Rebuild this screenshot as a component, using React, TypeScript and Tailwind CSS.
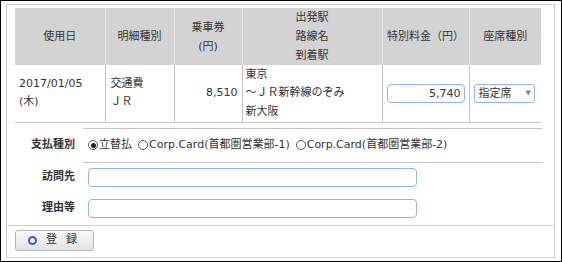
const font = { fontFamily: '"DejaVu Sans", "Noto Sans CJK JP", sans-serif' };

function Radio({ checked, label }: { checked?: boolean; label: string }) {
  return (
    <label className="flex items-center">
      <span className="w-[10px] h-[10px] rounded-full border border-[#555] flex items-center justify-center bg-white">
        {checked && <span className="w-[5px] h-[5px] rounded-full bg-[#222]" />}
      </span>
      <span className="ml-[1px]">{label}</span>
    </label>
  );
}

function InputRow({ label, h }: { label: string; h: string }) {
  return (
    <div className={`${h} flex`}>
      <div className="w-[76px] shrink-0 font-bold pr-[8px] flex items-center justify-end">{label}</div>
      <div className="flex items-center pl-[5px]">
        <div className="w-[329px] h-[19px] border border-[#8fb4ee] rounded-[4px]" />
      </div>
    </div>
  );
}

export default function App() {
  const th = 'bg-[#d3d3d3] border-x border-[#e6e6e6] font-normal text-center leading-[19px] p-0';
  const td = 'border-x border-[#c4c4c4] align-middle leading-[18.5px] p-0';

  return (
    <div className="w-[562px] h-[262px] border border-black bg-white pl-[5px] pr-[6px] pt-[3px] text-[11px] text-[#333]" style={font}>
      <div className="w-[549px] h-[254px] border border-[#cfcfcf] flex flex-col">
        <div className="pl-[8px] pr-[12px] pt-[3px]">
          <table className="border-collapse table-fixed w-[526px]">
            <colgroup>
              <col className="w-[90px]" />
              <col className="w-[69px]" />
              <col className="w-[68px]" />
              <col className="w-[140px]" />
              <col className="w-[87px]" />
              <col className="w-[72px]" />
            </colgroup>
            <thead>
              <tr className="h-[57px]">
                <th className={`${th} border-l-0`}>使用日</th>
                <th className={th}>明細種別</th>
                <th className={th}>乗車券<br />(円)</th>
                <th className={th}>出発駅<br />路線名<br />到着駅</th>
                <th className={th}>特別料金（円）</th>
                <th className={`${th} border-r-0`}>座席種別</th>
              </tr>
            </thead>
            <tbody>
              <tr className="h-[57px] border-b border-[#c4c4c4]">
                <td className={`${td} border-l-0 pl-[4px]`}>2017/01/05<br />(木)</td>
                <td className={`${td} pl-[5px]`}>交通費<br />ＪＲ</td>
                <td className={`${td} text-right pr-[4px]`}>8,510</td>
                <td className={`${td} pl-[3px]`}>東京<br />～ＪＲ新幹線のぞみ<br />新大阪</td>
                <td className={`${td} px-[4px]`}>
                  <div className="h-[19px] border border-[#8fb4ee] rounded-[4px] text-right pr-[3px] leading-[17px]">5,740</div>
                </td>
                <td className={`${td} border-r-0 pl-[4px] pr-[6px]`}>
                  <div className="h-[19px] border border-[#8fb4ee] rounded-[3px] flex items-center justify-between pl-[4px] pr-[3px] leading-[17px]">
                    <span>指定席</span>
                    <span className="text-[7px] text-[#888]">▼</span>
                  </div>
                </td>
              </tr>
            </tbody>
          </table>
        </div>

        <div className="pr-[12px] mt-[5px]">
          <div className="flex">
            <div className="w-[76px] shrink-0 font-bold pr-[8px] flex items-center justify-end">支払種別</div>
            <div className="flex-1 flex items-center pl-[5px] border-y border-[#c4c4c4] h-[35px]">
              <div className="flex gap-[6px] items-center">
                <Radio checked label="立替払" />
                <Radio label="Corp.Card(首都圏営業部-1)" />
                <Radio label="Corp.Card(首都圏営業部-2)" />
              </div>
            </div>
          </div>
          <InputRow label="訪問先" h="h-[30px]" />
          <InputRow label="理由等" h="h-[32px]" />
        </div>

        <div className="border-t border-[#cfcfcf] pl-[8px] pt-[4px]">
          <button className="w-[79px] h-[21px] border border-[#b5b5b5] rounded-[3px] bg-gradient-to-b from-[#fafafa] to-[#e2e2e2] flex items-center pl-[12px] text-[#333]">
            <span className="w-[9px] h-[9px] rounded-full border-[2px] border-[#2f5fd0]" />
            <span className="ml-[9px] tracking-[9px]">登録</span>
          </button>
        </div>
      </div>
    </div>
  );
}
